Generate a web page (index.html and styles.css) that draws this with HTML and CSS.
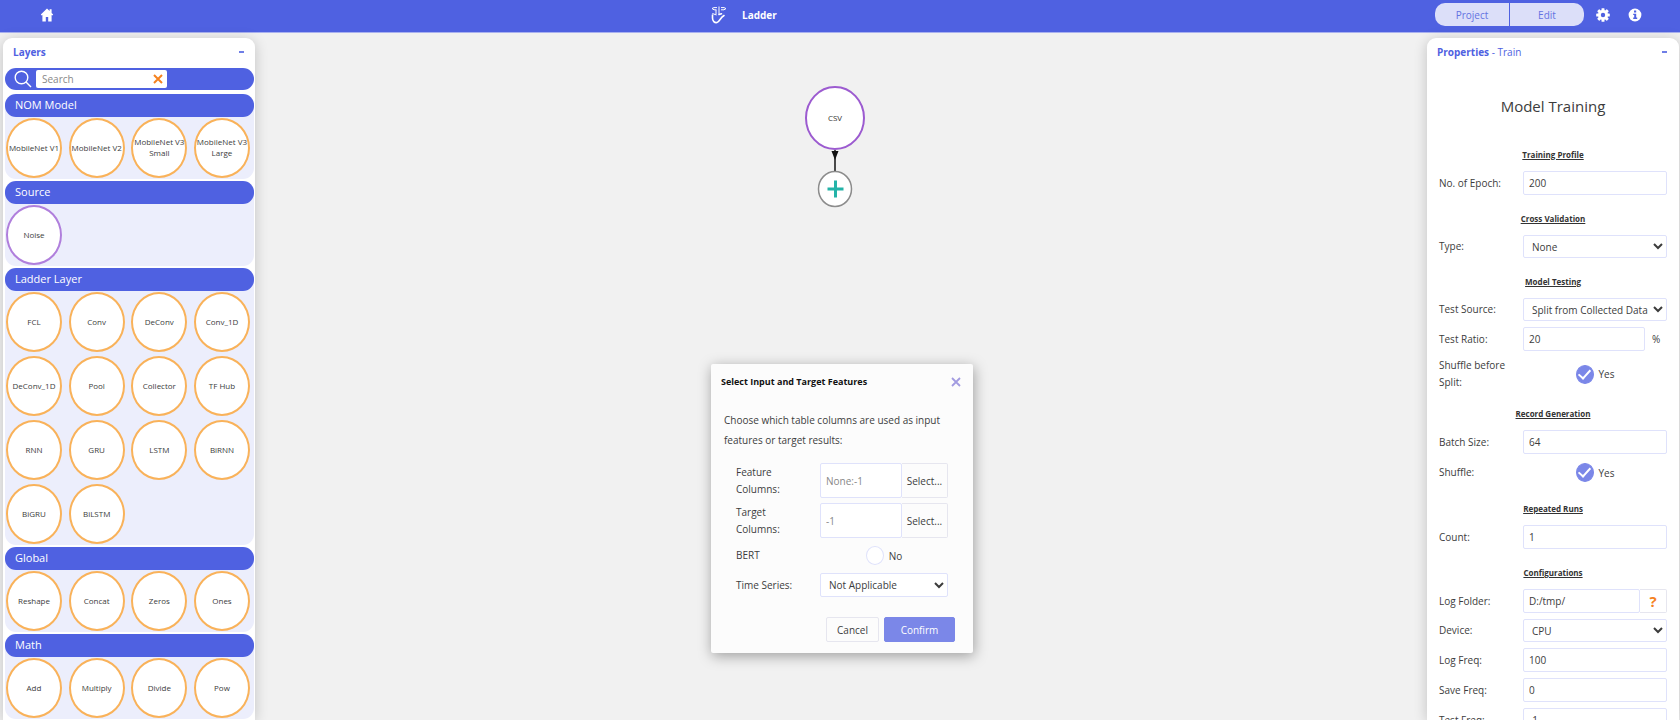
FILE: index.html
```html
<!DOCTYPE html>
<html lang="en">
<head>
    <meta charset="UTF-8">
    <meta name="viewport" content="width=device-width, initial-scale=1.0">
    <title>Ladder</title>
    <link rel="stylesheet" href="styles.css">
</head>
<body>
    <header class="topbar">
        <a class="home" href="#" aria-label="Home">
            <svg width="14" height="14" viewBox="0 0 14 14"><path fill="#fff" d="M7 .5 0.8 6.6l.9 1L2.4 7v6.5h3.4V9h2.4v4.5h3.4V7l.7.6.9-1-1.6-1.6V1.2h-2V3z"/></svg>
        </a>
        <div class="brand">
            <svg width="16" height="18" viewBox="0 0 16 18" fill="none" stroke="#fff">
                <path stroke-width="1" d="M1 2.500 3 1.600h3M1 2.500 3 3.800h2.500M10 1.600h3l2 1-2 1.200h-3M8 .5v8M5 4v4.500M1.400 7.500 5.500 9"/>
                <path stroke-width="1.600" stroke-linecap="round" d="M1.500 9v3c0 3 2 5 4.500 4.500 2.500-.5 3-4.500 7-7M8 8.500l2.500-.8"/>
            </svg>
            <span>Ladder</span>
        </div>
        <nav class="actions">
            <div class="switch">
                <button type="button">Project</button>
                <button type="button">Edit</button>
            </div>
            <button type="button" class="icon-button" aria-label="Settings">
                <svg width="14" height="14" viewBox="-7 -7 14 14">
                    <g fill="#fff">
                        <rect x="-1.500" y="-6.800" width="3" height="13.600" rx=".6"/>
                        <rect x="-1.500" y="-6.800" width="3" height="13.600" rx=".6" transform="rotate(45)"/>
                        <rect x="-1.500" y="-6.800" width="3" height="13.600" rx=".6" transform="rotate(90)"/>
                        <rect x="-1.500" y="-6.800" width="3" height="13.600" rx=".6" transform="rotate(135)"/>
                        <circle r="5"/>
                    </g>
                    <circle r="2.200" fill="#4f61e1"/>
                </svg>
            </button>
            <button type="button" class="icon-button" aria-label="About">
                <svg width="14" height="14" viewBox="0 0 14 14">
                    <circle cx="7" cy="7" r="6.400" fill="#fff"/>
                    <path fill="#4f61e1" d="M6 2.500h2.200v2H6zM5.200 5.700h3v3.900h1V11H5.200V9.600h1V7.100h-1z"/>
                </svg>
            </button>
        </nav>
    </header>

    <main class="workspace">
        <aside class="panel layers">
            <div class="panel-header">
                <h2>Layers</h2>
                <button type="button" class="collapse" aria-label="Collapse layers"></button>
            </div>
            <div class="search">
                <svg width="18" height="18" viewBox="0 0 18 18" fill="none" stroke="#fff" stroke-width="1.400"><circle cx="7.500" cy="7.500" r="6.300"/><path d="m12 12 5 5"/></svg>
                <div class="search-box">
                    <input type="text" placeholder="Search" aria-label="Search layers">
                    <button type="button" aria-label="Clear search">
                        <svg width="10" height="10" viewBox="0 0 10 10" stroke="#f5821f" stroke-width="2"><path d="m1 1 8 8M9 1 1 9"/></svg>
                    </button>
                </div>
            </div>

            <section class="group">
                <h3>NOM Model</h3>
                <div class="nodes">
                    <button type="button">MobileNet V1</button>
                    <button type="button">MobileNet V2</button>
                    <button type="button">MobileNet V3<br>Small</button>
                    <button type="button">MobileNet V3<br>Large</button>
                </div>
            </section>
            <section class="group">
                <h3>Source</h3>
                <div class="nodes">
                    <button type="button" class="source">Noise</button>
                </div>
            </section>
            <section class="group">
                <h3>Ladder Layer</h3>
                <div class="nodes">
                    <button type="button">FCL</button>
                    <button type="button">Conv</button>
                    <button type="button">DeConv</button>
                    <button type="button">Conv_1D</button>
                    <button type="button">DeConv_1D</button>
                    <button type="button">Pool</button>
                    <button type="button">Collector</button>
                    <button type="button">TF Hub</button>
                    <button type="button">RNN</button>
                    <button type="button">GRU</button>
                    <button type="button">LSTM</button>
                    <button type="button">BiRNN</button>
                    <button type="button">BiGRU</button>
                    <button type="button">BiLSTM</button>
                </div>
            </section>
            <section class="group">
                <h3>Global</h3>
                <div class="nodes">
                    <button type="button">Reshape</button>
                    <button type="button">Concat</button>
                    <button type="button">Zeros</button>
                    <button type="button">Ones</button>
                </div>
            </section>
            <section class="group">
                <h3>Math</h3>
                <div class="nodes">
                    <button type="button">Add</button>
                    <button type="button">Multiply</button>
                    <button type="button">Divide</button>
                    <button type="button">Pow</button>
                </div>
            </section>
        </aside>

        <div class="canvas">
            <svg class="graph" width="64" height="124" viewBox="0 0 64 124">
                <path stroke="#111" stroke-width="1.500" d="M32 65v22"/>
                <path fill="#111" d="M28.500 66h7L32 75z"/>
                <ellipse cx="32" cy="33" rx="29" ry="31" fill="#fff" stroke="#9c5bd0" stroke-width="2"/>
                <text x="32" y="36" text-anchor="middle">CSV</text>
                <ellipse cx="32" cy="104" rx="16.500" ry="17.500" fill="#fff" stroke="#8c8c8c" stroke-width="1.500"/>
                <path stroke="#24b3a8" stroke-width="3" d="M24.500 104h16M32.500 95.500v17"/>
            </svg>
        </div>

        <aside class="panel properties">
            <div class="panel-header">
                <h2>Properties <span>- Train</span></h2>
                <button type="button" class="collapse" aria-label="Collapse properties"></button>
            </div>
            <form class="train-form">
                <h1>Model Training</h1>

                <fieldset>
                    <legend>Training Profile</legend>
                    <div class="row">
                        <label for="epoch">No. of Epoch:</label>
                        <input type="text" id="epoch" value="200">
                    </div>
                </fieldset>
                <fieldset>
                    <legend>Cross Validation</legend>
                    <div class="row">
                        <label for="type">Type:</label>
                        <select id="type"><option>None</option></select>
                    </div>
                </fieldset>
                <fieldset>
                    <legend>Model Testing</legend>
                    <div class="row">
                        <label for="source">Test Source:</label>
                        <select id="source"><option>Split from Collected Data</option></select>
                    </div>
                    <div class="row">
                        <label for="ratio">Test Ratio:</label>
                        <div class="with-unit"><input type="text" id="ratio" value="20"><span>%</span></div>
                    </div>
                    <div class="row row-tall">
                        <span class="label">Shuffle before Split:</span>
                        <label class="tick"><input type="checkbox" checked>Yes</label>
                    </div>
                </fieldset>
                <fieldset>
                    <legend>Record Generation</legend>
                    <div class="row">
                        <label for="batch">Batch Size:</label>
                        <input type="text" id="batch" value="64">
                    </div>
                    <div class="row row-tick">
                        <span class="label">Shuffle:</span>
                        <label class="tick"><input type="checkbox" checked>Yes</label>
                    </div>
                </fieldset>
                <fieldset>
                    <legend>Repeated Runs</legend>
                    <div class="row">
                        <label for="count">Count:</label>
                        <input type="text" id="count" value="1">
                    </div>
                </fieldset>
                <fieldset>
                    <legend>Configurations</legend>
                    <div class="row">
                        <label for="folder">Log Folder:</label>
                        <div class="with-button"><input type="text" id="folder" value="D:/tmp/"><button type="button" class="help">?</button></div>
                    </div>
                    <div class="row">
                        <label for="device">Device:</label>
                        <select id="device"><option>CPU</option></select>
                    </div>
                    <div class="row">
                        <label for="logFreq">Log Freq:</label>
                        <input type="text" id="logFreq" value="100">
                    </div>
                    <div class="row">
                        <label for="saveFreq">Save Freq:</label>
                        <input type="text" id="saveFreq" value="0">
                    </div>
                    <div class="row">
                        <label for="testFreq">Test Freq:</label>
                        <input type="text" id="testFreq" value="-1">
                    </div>
                </fieldset>
            </form>
        </aside>
    </main>

    <form class="dialog" role="dialog" aria-labelledby="dialogTitle">
        <div class="dialog-header">
            <h2 id="dialogTitle">Select Input and Target Features</h2>
            <button type="button" aria-label="Close">
                <svg width="10" height="10" viewBox="0 0 10 10" stroke="#a29be0" stroke-width="1.800"><path d="m1 1 8 8M9 1 1 9"/></svg>
            </button>
        </div>
        <p>Choose which table columns are used as input features or target results:</p>
        <div class="dialog-rows">
            <div class="row">
                <label for="features">Feature<br>Columns:</label>
                <div class="with-button"><input type="text" id="features" placeholder="None:-1"><button type="button">Select...</button></div>
            </div>
            <div class="row">
                <label for="targets">Target<br>Columns:</label>
                <div class="with-button"><input type="text" id="targets" placeholder="-1"><button type="button">Select...</button></div>
            </div>
            <div class="row row-tick">
                <span class="label">BERT</span>
                <label class="tick"><input type="checkbox">No</label>
            </div>
            <div class="row">
                <label for="series">Time Series:</label>
                <select id="series"><option>Not Applicable</option></select>
            </div>
        </div>
        <div class="dialog-buttons">
            <button type="button">Cancel</button>
            <button type="button" class="confirm">Confirm</button>
        </div>
    </form>
</body>
</html>
```
FILE: styles.css
```css
* {
    margin: 0;
    padding: 0;
    box-sizing: border-box;
}

body {
    display: flex;
    flex-direction: column;
    height: 100vh;
    overflow: hidden;
    background-color: #f1f1f1;
    color: #3c3c3c;
    font-family: "Open Sans", "Noto Sans", sans-serif;
    font-size: 10px;
}

button, input, select {
    font: inherit;
    color: inherit;
}

button {
    border: none;
    background: none;
    cursor: pointer;
}

svg {
    display: block;
}

/* Top bar */
.topbar {
    flex: none;
    display: grid;
    grid-template-columns: 1fr 258px 1fr;
    align-items: center;
    height: 33px;
    padding-bottom: 3px;
    background-color: #4f61e1;
    border-bottom: 1px solid #a9b1f0;
    color: #fff;
}

.home {
    justify-self: start;
    margin-left: 40px;
}

.brand {
    display: flex;
    align-items: center;
    gap: 15px;
    font-weight: bold;
}

.actions {
    display: flex;
    justify-content: flex-end;
    align-items: center;
    padding-right: 38px;
}

.switch {
    display: flex;
    gap: 1px;
    margin-right: 12px;
}

.switch button {
    width: 74px;
    height: 23px;
    background-color: #dcdff9;
    color: #6473e2;
}

.switch button:first-child {
    border-radius: 10px 0 0 10px;
}

.switch button:last-child {
    border-radius: 0 10px 10px 0;
}

.icon-button + .icon-button {
    margin-left: 18px;
}

/* Panels */
.workspace {
    flex: 1;
    display: flex;
    min-height: 0;
    padding: 5px 1px 0 3px;
}

.panel {
    flex: none;
    width: 252px;
    overflow: hidden;
    background-color: #fff;
    border-radius: 9px 9px 0 0;
    box-shadow: 0 2px 14px rgba(0, 0, 0, 0.2);
}

.panel-header {
    display: flex;
    justify-content: space-between;
    align-items: center;
    height: 30px;
    padding: 0 12px 3px 10px;
    color: #4f61e1;
}

.panel-header h2 {
    font-size: 10px;
}

.panel-header span {
    font-weight: normal;
}

.collapse {
    width: 5px;
    height: 2px;
    background-color: #6f7ee6;
}

/* Layers */
.layers {
    padding: 0 1px 0 2px;
}

.layers .panel-header {
    padding-left: 8px;
    padding-right: 10px;
}

.search {
    display: flex;
    align-items: center;
    gap: 4px;
    height: 22px;
    margin-bottom: 4px;
    padding-left: 9px;
    border-radius: 11px;
    background-color: #4f61e1;
}

.search-box {
    display: flex;
    align-items: center;
    width: 131px;
    height: 18px;
    padding: 0 4px 0 6px;
    border-radius: 2px;
    background-color: #fff;
}

.search-box input {
    flex: 1;
    min-width: 0;
    border: none;
    outline: none;
}

::placeholder {
    color: #888;
}

.group {
    margin-bottom: 2px;
    border-radius: 11px;
    background-color: #eceefc;
}

.group h3 {
    height: 23px;
    padding-left: 10px;
    border-radius: 11px;
    background-color: #4f61e1;
    color: #fff;
    font-size: 11px;
    font-weight: normal;
    line-height: 22px;
}

.nodes {
    display: grid;
    grid-template-columns: repeat(4, 56px);
    justify-content: space-between;
    row-gap: 4px;
    padding: 1px 4px 1px 1px;
}

.nodes button {
    height: 60px;
    padding-bottom: 2px;
    border: 2px solid #f9b25a;
    border-radius: 50%;
    background-color: #fff;
    font-size: 8px;
    line-height: 11px;
    white-space: nowrap;
    display: flex;
    align-items: center;
    justify-content: center;
}

.nodes .source {
    border-color: #b07fdc;
}

/* Canvas */
.canvas {
    flex: 1;
    position: relative;
}

.graph {
    position: absolute;
    left: calc(50% - 38px);
    top: 47px;
}

.graph text {
    font-size: 8px;
    fill: #333;
}

/* Forms */
.train-form {
    padding: 24px 12px 0;
}

.train-form h1 {
    height: 53px;
    font-size: 15px;
    font-weight: normal;
    line-height: 28px;
    text-align: center;
}

fieldset {
    display: flex;
    flex-direction: column;
    gap: 6px;
    border: none;
    margin-bottom: 14px;
}

legend {
    height: 20px;
    margin: 0 auto 6px;
    color: #333;
    font-size: 8px;
    font-weight: bold;
    line-height: 20px;
    text-decoration: underline;
}

.row {
    display: grid;
    grid-template-columns: 84px 1fr;
    align-items: center;
}

.row > label:first-child, .label {
    line-height: 17px;
}

.label {
    max-width: 74px;
}

.row-tall {
    height: 33px;
}

.row-tick {
    height: 25px;
}

input[type="text"], select {
    width: 100%;
    min-width: 0;
    outline: none;
}

.row input[type="text"], .row select {
    height: 24px;
    padding: 0 5px;
    border: 1px solid #dfe2fb;
    border-radius: 2px;
    background-color: #fff;
}

.row select {
    height: 23px;
    padding: 0 0 0 4px;
}

.with-unit, .with-button {
    display: flex;
    align-items: center;
}

.with-unit input {
    flex: 1;
}

.with-unit span {
    width: 22px;
    padding-left: 7px;
}

.with-button button {
    flex: none;
    align-self: stretch;
    border: 1px solid #e6e6ef;
    border-left: none;
    border-radius: 0 2px 2px 0;
}

.with-button .help {
    width: 27px;
    color: #f5821f;
    font-size: 15px;
    font-weight: bold;
    line-height: 20px;
}

.tick {
    display: flex;
    align-items: center;
    justify-content: center;
    gap: 5px;
}

.tick input {
    appearance: none;
    display: grid;
    place-items: center;
    width: 18px;
    height: 19px;
    border: 1px solid #dfe2fb;
    border-radius: 50%;
    background-color: #fff;
}

.tick input:checked {
    border-color: #7b87e8;
    background-color: #7b87e8;
}

.tick input:checked::after {
    content: "";
    width: 5px;
    height: 10px;
    margin-bottom: 3px;
    border: solid #fff;
    border-width: 0 2px 2px 0;
    transform: rotate(42deg);
}

/* Dialog */
.dialog {
    position: absolute;
    top: 364px;
    left: calc(50% - 129px);
    width: 262px;
    padding: 0 18px 11px 10px;
    background-color: #fcfcfc;
    border-radius: 2px;
    box-shadow: 1px 3px 14px rgba(0, 0, 0, 0.35);
}

.dialog-header {
    display: flex;
    justify-content: space-between;
    align-items: center;
    height: 35px;
    margin-right: -6px;
}

.dialog-header h2 {
    color: #111;
    font-size: 9px;
}

.dialog p {
    margin: 11px 0 13px;
    padding-left: 3px;
    line-height: 20px;
}

.dialog-rows {
    display: flex;
    flex-direction: column;
    gap: 5px;
    padding: 0 7px 0 15px;
}

.dialog .with-button input {
    height: 35px;
}

.dialog .with-button button {
    width: 46px;
}

.dialog .row select {
    height: 24px;
}

.dialog-buttons {
    display: flex;
    justify-content: flex-end;
    gap: 5px;
    margin-top: 20px;
}

.dialog-buttons button {
    width: 53px;
    height: 25px;
    border: 1px solid #e6e6ef;
    border-radius: 2px;
}

.dialog-buttons .confirm {
    width: 71px;
    border-color: #7b87e8;
    background-color: #7b87e8;
    color: #fff;
}
```
